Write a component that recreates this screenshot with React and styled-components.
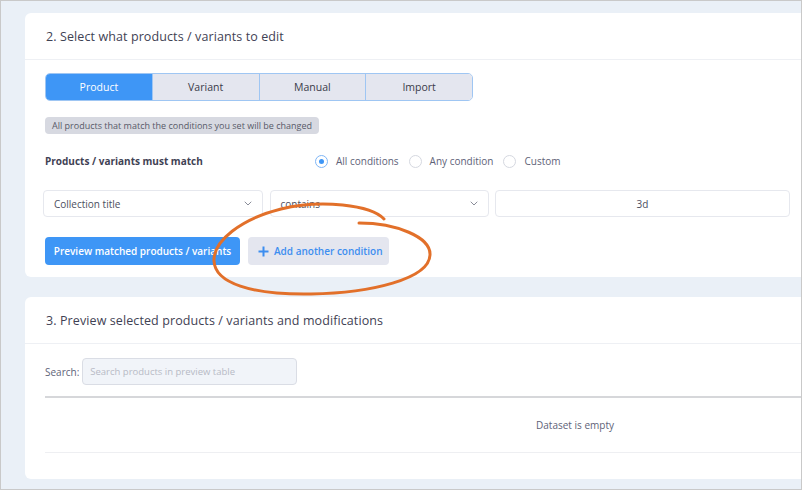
import React from 'react';
import styled, { createGlobalStyle } from 'styled-components';

const GlobalStyle = createGlobalStyle`
  html, body {
    margin: 0;
    padding: 0;
    background: #ffffff;
  }
  * {
    box-sizing: border-box;
  }
`;

const FONT = `"Open Sans", "Liberation Sans", sans-serif`;

const Frame = styled.div`
  position: relative;
  width: 802px;
  height: 490px;
  border: 1px solid #c9c9c9;
  background: #eaf0f7;
  overflow: hidden;
  font-family: ${FONT};
  color: #3f4254;
`;

const Content = styled.div`
  display: flex;
  flex-direction: column;
  gap: 20px;
  padding: 12px 24px 0 24px;
  width: 1148px;
`;

const Card = styled.section`
  background: #ffffff;
  border-radius: 6px;
  width: 1100px;
`;

const CardHeader = styled.div`
  display: flex;
  align-items: center;
  height: 47px;
  padding: 0 20px 0 21px;
  border-bottom: 1px solid #eef0f4;
`;

const CardTitle = styled.h2`
  margin: 0;
  font-size: 12.5px;
  font-weight: 500;
  color: #3f4254;
  letter-spacing: 0.1px;
`;

const CardBody = styled.div`
  display: flex;
  flex-direction: column;
  padding: ${p => p.$pad || '13px 20px 12px 20px'};
`;

/* segmented tab switcher */
const Tabs = styled.div`
  display: flex;
  width: 428px;
  height: 28px;
  border: 1px solid #9fc6f3;
  border-radius: 5px;
  overflow: hidden;
`;

const Tab = styled.div`
  flex: 1;
  display: flex;
  align-items: center;
  justify-content: center;
  font-size: 10.5px;
  color: ${p => (p.$active ? '#ffffff' : '#3a3b4a')};
  background: ${p => (p.$active ? '#3e96f6' : '#e4e6ef')};
  border-left: ${p => (p.$first ? 'none' : '1px solid #9fc6f3')};
`;

const Badge = styled.div`
  align-self: flex-start;
  margin-top: 16px;
  height: 17px;
  padding: 0 7px;
  display: flex;
  align-items: center;
  border-radius: 4px;
  background: #d7d9e1;
  color: #575a68;
  font-size: 9px;
`;

const MatchRow = styled.div`
  display: flex;
  align-items: center;
  height: 20px;
  margin-top: 17px;
`;

const MatchLabel = styled.div`
  width: 270px;
  font-size: 10px;
  font-weight: 700;
  color: #3f4254;
`;

const RadioGroup = styled.div`
  display: flex;
  align-items: center;
  gap: 10px;
`;

const RadioItem = styled.label`
  display: flex;
  align-items: center;
  gap: 8px;
  font-size: 10px;
  color: #5e6278;
`;

const RadioDot = styled.span`
  width: 13px;
  height: 13px;
  border-radius: 50%;
  border: 1px solid ${p => (p.$checked ? '#7fb6f6' : '#d5d8e0')};
  display: flex;
  align-items: center;
  justify-content: center;

  &::after {
    content: '';
    width: 5px;
    height: 5px;
    border-radius: 50%;
    background: ${p => (p.$checked ? '#3e96f6' : 'transparent')};
  }
`;

const ConditionRow = styled.div`
  display: grid;
  grid-template-columns: 220px 219px 295px;
  gap: 6.5px;
  margin: 19px 0 0 -2px;
`;

const Field = styled.div`
  height: 27px;
  display: flex;
  align-items: center;
  justify-content: ${p => (p.$center ? 'center' : 'space-between')};
  padding: 0 10px;
  border: 1px solid #e6e8ee;
  border-radius: 4px;
  background: #ffffff;
  font-size: 10px;
  color: #4b4e5e;
`;

const Chevron = () => (
  <svg width="8" height="5" viewBox="0 0 8 5">
    <path d="M1 1l3 3 3-3" fill="none" stroke="#8a8d99" strokeWidth="1" strokeLinecap="round" />
  </svg>
);

const ButtonRow = styled.div`
  display: flex;
  gap: 8px;
  margin-top: 20px;
`;

const Button = styled.button`
  height: 28px;
  padding: ${p => (p.$secondary ? '0 0 0 10px' : '0')};
  display: flex;
  align-items: center;
  gap: 5px;
  border: none;
  border-radius: 4px;
  white-space: nowrap;
  font-family: ${FONT};
  font-size: 10px;
  font-weight: 600;
  color: ${p => (p.$secondary ? '#3d8ef0' : '#ffffff')};
  background: ${p => (p.$secondary ? '#e4e6ef' : '#3e96f6')};
  width: ${p => p.$w}px;
  justify-content: ${p => (p.$secondary ? 'flex-start' : 'center')};
`;

const PlusIcon = () => (
  <svg width="11" height="11" viewBox="0 0 11 11">
    <path d="M5.5 0.5v10M0.5 5.5h10" stroke="#3d8ef0" strokeWidth="2" />
  </svg>
);

const SearchRow = styled.div`
  display: flex;
  align-items: center;
  gap: 3px;
`;

const SearchLabel = styled.span`
  font-size: 10px;
  color: #5e6278;
`;

const SearchInput = styled.input`
  width: 215px;
  height: 27px;
  padding: 0 7px;
  border: 1px solid #dadde5;
  border-radius: 4px;
  background: #f1f4f9;
  font-family: ${FONT};
  font-size: 9.5px;
  color: #4b4e5e;
  outline: none;

  &::placeholder {
    color: #b7bac5;
  }
`;

const Table = styled.div`
  margin-top: 11px;
  border-top: 2px solid #d6d7da;
  border-bottom: 1px solid #eeeff2;
`;

const EmptyRow = styled.div`
  height: 54px;
  display: flex;
  align-items: center;
  justify-content: center;
  font-size: 10px;
  color: #5e6278;
`;

/* hand-drawn highlight ring over the add-condition button */
const Scribble = styled.svg`
  position: absolute;
  left: 0;
  top: 0;
  pointer-events: none;
`;

const tabs = ['Product', 'Variant', 'Manual', 'Import'];
const radios = [
  { label: 'All conditions', checked: true },
  { label: 'Any condition' },
  { label: 'Custom' },
];

export default function App() {
  return (
    <>
      <GlobalStyle />
      <Frame>
        <Content>
          <Card>
            <CardHeader>
              <CardTitle>2. Select what products / variants to edit</CardTitle>
            </CardHeader>
            <CardBody>
              <Tabs>
                {tabs.map((t, i) => (
                  <Tab key={t} $active={i === 0} $first={i === 0}>
                    {t}
                  </Tab>
                ))}
              </Tabs>
              <Badge>All products that match the conditions you set will be changed</Badge>
              <MatchRow>
                <MatchLabel>Products / variants must match</MatchLabel>
                <RadioGroup>
                  {radios.map(r => (
                    <RadioItem key={r.label}>
                      <RadioDot $checked={r.checked} />
                      {r.label}
                    </RadioItem>
                  ))}
                </RadioGroup>
              </MatchRow>
              <ConditionRow>
                <Field>
                  Collection title
                  <Chevron />
                </Field>
                <Field>
                  contains
                  <Chevron />
                </Field>
                <Field $center>3d</Field>
              </ConditionRow>
              <ButtonRow>
                <Button $w={195}>Preview matched products / variants</Button>
                <Button $secondary $w={141}>
                  <PlusIcon />
                  Add another condition
                </Button>
              </ButtonRow>
            </CardBody>
          </Card>

          <Card>
            <CardHeader>
              <CardTitle>3. Preview selected products / variants and modifications</CardTitle>
            </CardHeader>
            <CardBody $pad="14px 20px 26px 20px">
              <SearchRow>
                <SearchLabel>Search:</SearchLabel>
                <SearchInput placeholder="Search products in preview table" />
              </SearchRow>
              <Table>
                <EmptyRow>Dataset is empty</EmptyRow>
              </Table>
            </CardBody>
          </Card>
        </Content>

        <Scribble width="802" height="490" viewBox="0 0 802 490">
          <path
            d="M383 218 C370 204 320 198 280 208 C240 218 212 240 213 260 C214 282 250 294 310 293 C370 292 428 278 429 254 C430 236 395 222 358 222"
            fill="none"
            stroke="#e2702a"
            strokeWidth="3"
            strokeLinecap="round"
          />
        </Scribble>
      </Frame>
    </>
  );
}
